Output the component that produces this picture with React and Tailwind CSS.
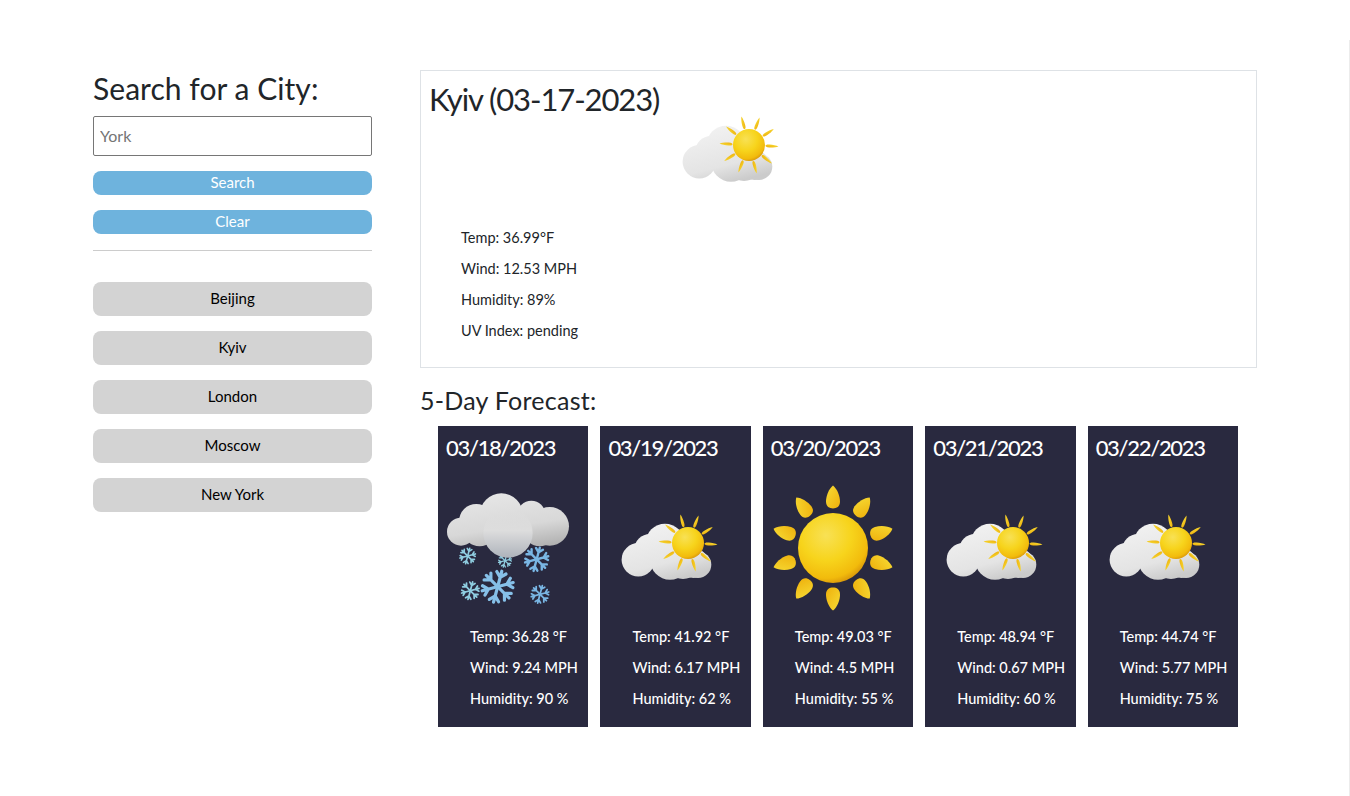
import React, { useId } from 'react';

const cities = ['Beijing', 'Kyiv', 'London', 'Moscow', 'New York'];

const forecast = [
  { date: '03/18/2023', icon: 'snow', temp: '36.28', wind: '9.24', humidity: '90' },
  { date: '03/19/2023', icon: 'partly', temp: '41.92', wind: '6.17', humidity: '62' },
  { date: '03/20/2023', icon: 'sun', temp: '49.03', wind: '4.5', humidity: '55' },
  { date: '03/21/2023', icon: 'partly', temp: '48.94', wind: '0.67', humidity: '60' },
  { date: '03/22/2023', icon: 'partly', temp: '44.74', wind: '5.77', humidity: '75' },
];

const Rays = ({ count, start, cx, cy, dist, len, wide, fill }) => {
  const rays = [];
  for (let i = 0; i < count; i++) {
    const a = start + (360 / count) * i;
    rays.push(
      <path
        key={i}
        transform={`rotate(${a} ${cx} ${cy}) translate(${cx} ${cy - dist})`}
        d={`M0 ${-len} C${wide * 0.6} ${-len * 0.7} ${wide} ${-len * 0.1} ${wide} ${len * 0.4} C${wide} ${len * 0.85} ${wide * 0.5} ${len} 0 ${len} C${-wide * 0.5} ${len} ${-wide} ${len * 0.85} ${-wide} ${len * 0.4} C${-wide} ${-len * 0.1} ${-wide * 0.6} ${-len * 0.7} 0 ${-len}Z`}
        fill={fill}
      />
    );
  }
  return <g>{rays}</g>;
};

const SunGradients = ({ id }) => (
  <>
    <radialGradient id={`${id}-sun`} cx="0.4" cy="0.32" r="0.72">
      <stop offset="0" stopColor="#f8e155" />
      <stop offset="0.5" stopColor="#f7d41c" />
      <stop offset="0.85" stopColor="#f2bb0c" />
      <stop offset="1" stopColor="#d6930a" />
    </radialGradient>
    <linearGradient id={`${id}-ray`} x1="0" y1="0" x2="1" y2="1">
      <stop offset="0" stopColor="#f7dc35" />
      <stop offset="1" stopColor="#eeb00c" />
    </linearGradient>
  </>
);

const PartlyCloudy = () => {
  const id = useId();
  return (
    <svg width="100" height="100" viewBox="0 0 100 100">
      <defs>
        <SunGradients id={id} />
        <linearGradient id={`${id}-cloud`} gradientUnits="userSpaceOnUse" x1="30" y1="25" x2="45" y2="84">
          <stop offset="0" stopColor="#f2f2f2" />
          <stop offset="0.7" stopColor="#e4e4e4" />
          <stop offset="1" stopColor="#cbcbcb" />
        </linearGradient>
      </defs>
      <g fill={`url(#${id}-cloud)`}>
        <circle cx="18.3" cy="61.7" r="16.7" />
        <circle cx="30" cy="51.7" r="15.7" />
        <circle cx="45" cy="45" r="19.3" />
        <circle cx="50" cy="61.7" r="20" />
        <circle cx="63" cy="62" r="19" />
        <circle cx="73.3" cy="65" r="15" />
        <circle cx="78" cy="66.7" r="13.3" />
      </g>
      <Rays count={10} start={-15} cx={68} cy={45} dist={23} len={6.5} wide={1.5} fill={`url(#${id}-ray)`} />
      <circle cx="68" cy="45" r="16" fill={`url(#${id}-sun)`} />
    </svg>
  );
};

const Sunny = () => {
  const id = useId();
  return (
    <svg width="130" height="130" viewBox="0 0 130 130">
      <defs>
        <SunGradients id={id} />
      </defs>
      <Rays count={10} start={0} cx={65} cy={65} dist={51} len={11.5} wide={7} fill={`url(#${id}-ray)`} />
      <circle cx="65" cy="65" r="35" fill={`url(#${id}-sun)`} />
    </svg>
  );
};

const Flake = ({ x, y, r, color }) => {
  const arms = [0, 60, 120];
  return (
    <g transform={`translate(${x} ${y}) scale(${r / 10})`} stroke={color} strokeWidth="2" fill="none" strokeLinecap="round">
      {arms.map((a) => (
        <g key={a} transform={`rotate(${a + 15})`}>
          <path d="M0 -10V10M-3 -9L0 -6L3 -9M-3 9L0 6L3 9" />
        </g>
      ))}
    </g>
  );
};

const Snowy = () => {
  const id = useId();
  return (
    <svg width="130" height="130" viewBox="0 0 390 390">
      <defs>
        <linearGradient id={`${id}-cloud`} gradientUnits="userSpaceOnUse" x1="150" y1="30" x2="180" y2="225">
          <stop offset="0" stopColor="#e6e6e6" />
          <stop offset="0.55" stopColor="#d8d8d8" />
          <stop offset="1" stopColor="#a8a8a8" />
        </linearGradient>
        <linearGradient id={`${id}-puff`} x1="0" y1="0" x2="0" y2="1">
          <stop offset="0" stopColor="#dedede" stopOpacity="0" />
          <stop offset="0.45" stopColor="#dddddd" />
          <stop offset="1" stopColor="#aeb3bb" />
        </linearGradient>
      </defs>
      <Flake x={74} y={219} r={24} color="#8fcde0" />
      <Flake x={186} y={233} r={20} color="#8fcde0" />
      <Flake x={281} y={229} r={36} color="#79b6e4" />
      <Flake x={164} y={311} r={48} color="#86c0e8" />
      <Flake x={82} y={323} r={27} color="#8fcde0" />
      <Flake x={291} y={334} r={27} color="#79b6e4" />
      <g fill={`url(#${id}-cloud)`}>
        <circle cx="54" cy="146" r="42" />
        <circle cx="100" cy="115" r="52" />
        <circle cx="110" cy="140" r="50" />
        <circle cx="175" cy="96" r="65" />
        <circle cx="235" cy="115" r="45" />
        <circle cx="265" cy="95" r="42" />
        <circle cx="320" cy="130" r="58" />
        <circle cx="290" cy="145" r="45" />
      </g>
      <circle cx="195" cy="150" r="74" fill={`url(#${id}-puff)`} />
    </svg>
  );
};

const icons = { snow: Snowy, partly: PartlyCloudy, sun: Sunny };

const App = () => {
  return (
    <div className="min-h-screen bg-white pt-10 font-[Lato,sans-serif] text-[#212529]">
      <div className="flex h-[756px] border-r border-[#ececec] pt-[30px] pl-[93px]">
        {/* Search sidebar */}
        <aside className="w-[279px] shrink-0">
          <h2 className="text-[30px] leading-9 tracking-[0.05px]">Search for a City:</h2>
          <input
            readOnly
            placeholder="York"
            className="mt-2.5 block h-10 w-full rounded-[2px] border border-[#767676] px-1.5 pb-0.5 text-base placeholder:text-[#757575]"
          />
          <button className="mt-[15px] block h-6 w-full rounded-lg bg-[#6eb3dd] pb-0.5 text-[15px] text-white">Search</button>
          <button className="mt-[15px] block h-6 w-full rounded-lg bg-[#6eb3dd] pb-0.5 text-[15px] text-white">Clear</button>
          <hr className="mt-4 border-[#cccccc]" />
          <div className="mt-[31px] flex flex-col gap-[15px]">
            {cities.map((city) => (
              <button key={city} className="h-[34px] w-full rounded-lg bg-[#d3d3d3] pb-0.5 text-[15px] text-black">
                {city}
              </button>
            ))}
          </div>
        </aside>

        {/* Results */}
        <main className="ml-12 w-[837px] shrink-0">
          <section className="h-[298px] border border-[#dee2e6] px-2">
            <div className="flex h-[156px]">
              <h2 className="mt-2 text-[31px] leading-10 tracking-[-1.1px]">Kyiv (03-17-2023)</h2>
              <div className="mt-[29px] ml-[22px]">
                <PartlyCloudy />
              </div>
            </div>
            <div className="ml-8 flex flex-col gap-[9px] text-[14.5px] leading-[22px]">
              <p>Temp: 36.99°F</p>
              <p>Wind: 12.53 MPH</p>
              <p>Humidity: 89%</p>
              <p>UV Index: pending</p>
            </div>
          </section>

          <h3 className="mt-4 text-[25px] leading-8 tracking-[0.25px]">5-Day Forecast:</h3>

          <div className="mt-[10px] ml-[18px] flex w-[800px] gap-3">
            {forecast.map((day) => {
              const Icon = icons[day.icon];
              return (
                <article key={day.date} className="h-[301px] flex-1 bg-[#29293f] text-white">
                  <h4 className="pt-1.5 pl-2 text-[22px] leading-8 font-medium tracking-[-1.3px]">{day.date}</h4>
                  <div className="mt-[19px] flex h-[130px] w-[140px] items-center justify-center">
                    <Icon />
                  </div>
                  <div className="mt-[13px] flex flex-col gap-[9px] pl-8 text-[14.5px] leading-[22px] font-medium whitespace-nowrap">
                    <p>Temp: {day.temp} °F</p>
                    <p>Wind: {day.wind} MPH</p>
                    <p>Humidity: {day.humidity} %</p>
                  </div>
                </article>
              );
            })}
          </div>
        </main>
      </div>
    </div>
  );
};

export default App;
